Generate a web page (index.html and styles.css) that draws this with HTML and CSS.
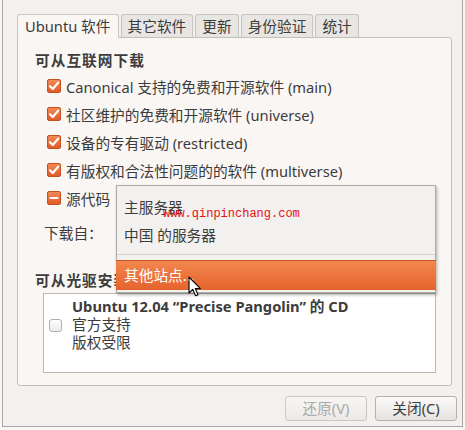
FILE: index.html
```html
<!DOCTYPE html>
<html>
<head>
<meta charset="utf-8">
<link rel="stylesheet" href="styles.css">
</head>
<body>
<div class="window">
  <div class="tabs">
    <div class="tab active">Ubuntu 软件</div>
    <div class="tab">其它软件</div>
    <div class="tab">更新</div>
    <div class="tab">身份验证</div>
    <div class="tab">统计</div>
  </div>
  <div class="panel">
    <div class="heading">可从互联网下载</div>
    <div class="rows">
      <div class="row"><span class="cb on"><svg viewBox="0 0 14 14" width="14" height="14"><path d="M3 7.2 L5.8 10 L11.2 3.6" fill="none" stroke="#fff" stroke-width="2.2" stroke-linecap="round" stroke-linejoin="round"/></svg></span>Canonical 支持的免费和开源软件 (main)</div>
      <div class="row"><span class="cb on"><svg viewBox="0 0 14 14" width="14" height="14"><path d="M3 7.2 L5.8 10 L11.2 3.6" fill="none" stroke="#fff" stroke-width="2.2" stroke-linecap="round" stroke-linejoin="round"/></svg></span>社区维护的免费和开源软件 (universe)</div>
      <div class="row"><span class="cb on"><svg viewBox="0 0 14 14" width="14" height="14"><path d="M3 7.2 L5.8 10 L11.2 3.6" fill="none" stroke="#fff" stroke-width="2.2" stroke-linecap="round" stroke-linejoin="round"/></svg></span>设备的专有驱动 (restricted)</div>
      <div class="row"><span class="cb on"><svg viewBox="0 0 14 14" width="14" height="14"><path d="M3 7.2 L5.8 10 L11.2 3.6" fill="none" stroke="#fff" stroke-width="2.2" stroke-linecap="round" stroke-linejoin="round"/></svg></span>有版权和合法性问题的的软件 (multiverse)</div>
      <div class="row"><span class="cb on"><svg viewBox="0 0 14 14" width="14" height="14"><path d="M3.5 7 L10.5 7" fill="none" stroke="#fff" stroke-width="2.2" stroke-linecap="round"/></svg></span>源代码</div>
    </div>
    <div class="dl-row">下载自：</div>
    <div class="heading heading2">可从光驱安装</div>
    <div class="cdbox">
      <span class="cb off"></span>
      <div class="cdtext">
        <div class="cdtitle">Ubuntu 12.04 “Precise Pangolin” 的 CD</div>
        <div>官方支持</div>
        <div>版权受限</div>
      </div>
    </div>
  </div>
  <div class="buttons">
    <div class="btn disabled">还原(V)</div>
    <div class="btn">关闭(C)</div>
  </div>
</div>
<div class="menu">
  <div class="item">主服务器</div>
  <div class="item">中国 的服务器</div>
  <div class="sep"></div>
  <div class="item hl">其他站点...</div>
</div>
<div class="watermark">www.qinpinchang.com</div>
<svg class="cursor" width="14" height="22" viewBox="0 0 14 22"><path d="M1 1 L1 17 L4.8 13.4 L7.6 19.8 L10 18.8 L7.3 12.6 L12.4 12.6 Z" fill="#fff" stroke="#000" stroke-width="1.1" stroke-linejoin="round"/></svg>
</body>
</html>
```
FILE: styles.css
```css
html, body {
  margin: 0;
  padding: 0;
}
body {
  width: 465px;
  height: 430px;
  background: #f7f7f6;
  font-family: "Noto Sans", "Noto Sans CJK SC", sans-serif;
  font-size: 14.7px;
  color: #3c3c3c;
  position: relative;
  overflow: hidden;
}
.window {
  margin-left: 2px;
  width: 459px;
  height: 426px;
  border: 1px solid #a9a7a4;
  border-top: none;
  background: #f2f1f0;
  display: flex;
  flex-direction: column;
}
.tabs {
  display: flex;
  gap: 2px;
  margin: 14px 0 0 14px;
}
.tab {
  height: 23px;
  line-height: 22px;
  padding: 0 6px;
  border: 1px solid #c8c4c0;
  border-bottom: none;
  border-radius: 3px 3px 0 0;
  background: #e8e6e3;
  box-sizing: border-box;
}
.tab.active {
  background: #faf6f3;
  height: 24px;
  margin-bottom: -1px;
  position: relative;
  z-index: 1;
  padding: 0 7px;
}
.panel {
  margin: 0 10px 0 14px;
  height: 349px;
  box-sizing: border-box;
  border: 1px solid #c3c0bc;
  border-radius: 0 3px 3px 3px;
  background: #faf6f3;
  padding: 12px 0 0 17px;
  display: flex;
  flex-direction: column;
}
.heading {
  font-weight: bold;
  height: 20px;
  line-height: 20px;
  letter-spacing: 1px;
}
.rows {
  margin: 2px 0 0 12px;
  display: flex;
  flex-direction: column;
}
.row {
  height: 28px;
  display: flex;
  align-items: center;
  gap: 5px;
}
.cb {
  width: 14px;
  height: 14px;
  box-sizing: border-box;
  border-radius: 2px;
  flex: none;
  display: block;
}
.cb svg {
  display: block;
  margin: -1px;
}
.cb.on {
  background: linear-gradient(#f38a58, #e05a26);
  border: 1px solid #c4501f;
}
.cb.off {
  width: 13px;
  height: 13px;
  border: 1px solid #b3b0ac;
  border-radius: 3px;
  background: linear-gradient(#ffffff, #eceae7);
}
.dl-row {
  margin: 7px 0 0 9px;
  height: 28px;
  line-height: 28px;
}
.heading2 {
  margin-top: 23px;
}
.cdbox {
  margin: 3px 0 0 8px;
  width: 393px;
  height: 80px;
  box-sizing: border-box;
  border: 1px solid #bcb9b5;
  background: #ffffff;
  display: flex;
  align-items: flex-start;
  padding: 3px 0 0 5px;
  gap: 10px;
}
.cdbox .cb.off {
  margin-top: 22px;
}
.cdtext {
  line-height: 18px;
}
.cdtitle {
  font-weight: bold;
}
.buttons {
  display: flex;
  justify-content: flex-end;
  gap: 8px;
  margin: 10px 5px 0 0;
}
.btn {
  width: 82px;
  height: 25px;
  box-sizing: border-box;
  border: 1px solid #b4b1ad;
  border-radius: 3px;
  background: linear-gradient(#fbfaf9, #e5e3e0);
  text-align: center;
  line-height: 23px;
}
.btn.disabled {
  color: #aaa8a5;
  border-color: #cbc8c4;
  background: linear-gradient(#f7f6f5, #eceae8);
}
.menu {
  position: absolute;
  left: 116px;
  top: 185px;
  width: 320px;
  height: 108px;
  box-sizing: border-box;
  border: 1px solid #aeaca9;
  background: #f2f1f0;
  box-shadow: 1px 2px 3px rgba(0,0,0,0.3);
  padding: 7px 0 0;
  display: flex;
  flex-direction: column;
}
.item {
  height: 28px;
  line-height: 28px;
  padding-left: 7px;
}
.sep {
  margin: 5px 0;
  height: 1px;
  background: #d6d3cf;
}
.item.hl {
  height: 30px;
  line-height: 29px;
  margin: 0 -1px;
  padding-left: 8px;
  color: #ffffff;
  background: linear-gradient(#f2864f, #e5642c);
  border-top: 1px solid #c8561f;
  box-sizing: border-box;
}
.watermark {
  position: absolute;
  left: 163px;
  top: 206px;
  font-family: "Liberation Mono", monospace;
  font-size: 12px;
  line-height: 16px;
  color: #e81010;
}
.cursor {
  position: absolute;
  left: 188px;
  top: 276px;
}
```
